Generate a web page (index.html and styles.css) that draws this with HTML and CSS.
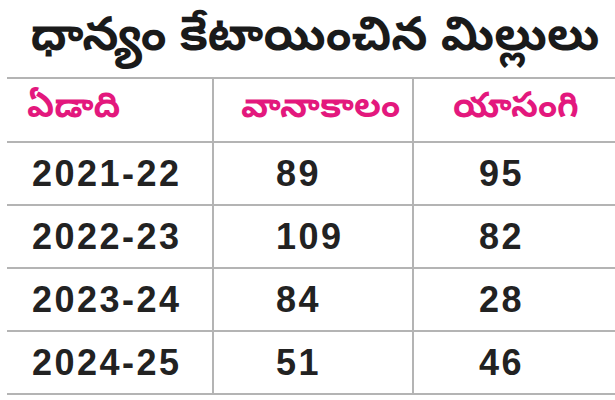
FILE: index.html
```html
<!DOCTYPE html>
<html lang="te">
<head>
    <meta charset="UTF-8">
    <meta name="viewport" content="width=device-width, initial-scale=1.0">
    <title>మిల్లులు</title>
    <link rel="stylesheet" href="styles.css">
</head>
<body>
    <div class="board">
        <div class="board-title">ధాన్యం కేటాయించిన మిల్లులు</div>
        <table class="mills">
            <thead>
                <tr>
                    <th class="col-year">ఏడాది</th>
                    <th class="col-rain">వానాకాలం</th>
                    <th class="col-yasangi">యాసంగి</th>
                </tr>
            </thead>
            <tbody>
                <tr>
                    <td class="col-year">2021-22</td>
                    <td class="col-rain">89</td>
                    <td class="col-yasangi">95</td>
                </tr>
                <tr>
                    <td class="col-year">2022-23</td>
                    <td class="col-rain">109</td>
                    <td class="col-yasangi">82</td>
                </tr>
                <tr>
                    <td class="col-year">2023-24</td>
                    <td class="col-rain">84</td>
                    <td class="col-yasangi">28</td>
                </tr>
                <tr>
                    <td class="col-year">2024-25</td>
                    <td class="col-rain">51</td>
                    <td class="col-yasangi">46</td>
                </tr>
            </tbody>
        </table>
    </div>
</body>
</html>
```

FILE: styles.css
```css
body {
    margin: 0;
    padding: 0;
    background-color: #fff;
    font-family: "Noto Sans Telugu", "Noto Sans", sans-serif;
}
.board {
    width: 615px;
    height: 400px;
    padding-left: 7px;
    box-sizing: border-box;
}
.board-title {
    height: 77px;
    display: flex;
    align-items: center;
    justify-content: center;
    font-size: 47px;
    font-weight: bold;
    color: #1a1a1a;
    padding-top: 4px;
    padding-left: 8px;
    box-sizing: border-box;
}
.mills {
    width: 608px;
    border-collapse: collapse;
    table-layout: fixed;
}
.mills th,
.mills td {
    box-sizing: border-box;
    height: 63px;
    padding: 0;
    text-align: left;
    vertical-align: middle;
    white-space: nowrap;
    border-top: 2px solid #b4b4b4;
    border-bottom: 2px solid #b4b4b4;
}
.mills th + th,
.mills td + td {
    border-left: 2px solid #b4b4b4;
}
.mills th {
    height: 64px;
    font-size: 35px;
    font-weight: bold;
    color: #e3187d;
}
.mills td {
    font-family: "Liberation Sans", Arial, sans-serif;
    font-size: 36px;
    font-weight: bold;
    letter-spacing: 2.5px;
    color: #222;
}
.col-year {
    width: 206px;
}
.col-rain {
    width: 200px;
}
th.col-year {
    padding-left: 20px;
}
th.col-rain {
    padding-left: 27px;
}
th.col-yasangi {
    padding-left: 39px;
}
td.col-year {
    padding-left: 25px;
}
td.col-rain {
    padding-left: 62px;
}
td.col-yasangi {
    padding-left: 65px;
}
```
